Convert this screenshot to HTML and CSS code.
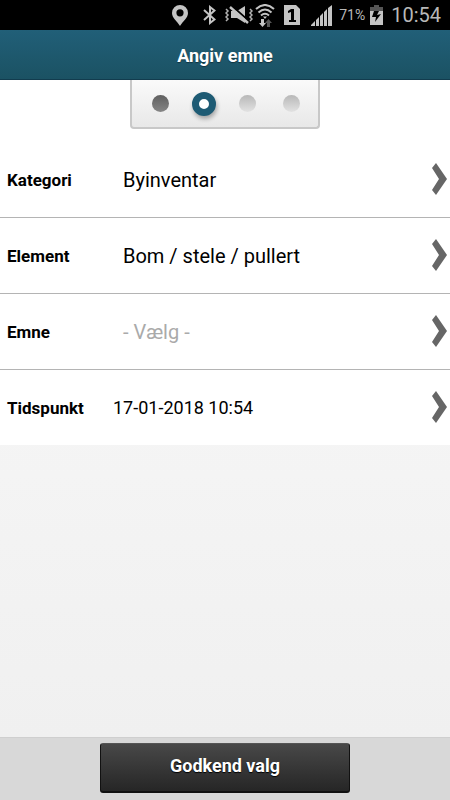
FILE: index.html
```html
<!DOCTYPE html>
<html lang="da">
<head>
<meta charset="utf-8">
<meta name="viewport" content="width=device-width, initial-scale=1">
<title>Angiv emne</title>
<link rel="stylesheet" href="styles.css">
</head>
<body>
<div class="statusbar">
  <svg width="16" height="21" viewBox="0 0 16 21" aria-hidden="true"><path fill="#c4c4c4" fill-rule="evenodd" d="M8 0a8 8 0 0 0-8 8c0 5 5 8 8 13 3-5 8-8 8-13a8 8 0 0 0-8-8zM8 4.200a3.600 3.600 0 1 1 0 7.200 3.600 3.600 0 0 1 0-7.200z"/></svg>
  <svg class="bluetooth" width="13" height="20" viewBox="0 0 13 20" aria-hidden="true"><path fill="none" stroke="#c4c4c4" stroke-width="2" d="M1 5l10.500 9.500L7 18V2l4.500 3.500L1 15"/></svg>
  <svg class="mute" width="28" height="20" viewBox="0 0 28 20" aria-hidden="true">
    <path fill="#c4c4c4" d="M6 6h6l8-5v17l-8-5H6z"/>
    <path stroke="#000" stroke-width="2" d="M7 1l18 16"/>
    <path stroke="#c4c4c4" stroke-width="2.500" d="M5 2l18 16"/>
    <path fill="none" stroke="#b0b0b0" stroke-width="1.500" d="M1 4l2 2-2 2 2 2-2 2 2 2-2 2M25 4l2 2-2 2 2 2-2 2 2 2-2 2"/>
  </svg>
  <svg class="wifi" width="20" height="23" viewBox="0 0 20 23" aria-hidden="true">
    <path fill="none" stroke="#c4c4c4" stroke-width="2" d="M1 5q9-8 18 0M3.500 8.500q6.500-6 13 0M6 11.500q4-3.500 8 0"/>
    <path fill="#c4c4c4" d="M8 12.500h4L10 15zM6 15h3v4h2l-3.500 4L4 19h2z"/>
    <path fill="#555" d="M12 23h3v-4h2l-3.500-4-3.500 4h2z"/>
  </svg>
  <svg class="sim" width="16" height="20" viewBox="0 0 16 20" aria-hidden="true"><path fill="#c4c4c4" d="M0 0h12l4 4v16H0z"/><path fill="#000" d="M7 4h3v11h2v2H5v-2h2V7L4 8V6z"/></svg>
  <svg class="signal" width="21" height="21" viewBox="0 0 21 21" aria-hidden="true"><path fill="#c4c4c4" d="M0 21v-1l4-4v5zM5 21v-6l3-3v9zM9 21V11l3-3v13zM13 21V7l3-3v17zM17 21V3l4-3v21z"/></svg>
  <span class="charge">71%</span>
  <svg class="battery" width="13" height="20" viewBox="0 0 13 20" aria-hidden="true"><path fill="#555" d="M4 0h5v2h4v5H0V2h4z"/><path fill="#c4c4c4" d="M0 6h13v14H0z"/><path fill="#000" d="M4 6h5L7 10l4-1-6 8 1-5H2z"/></svg>
  <time class="clock">10:54</time>
</div>
<header class="titlebar"><h1>Angiv emne</h1></header>
<main class="content">
  <div class="form">
    <ol class="steps" aria-label="Trin 2 af 4">
      <li class="step done"></li>
      <li class="step current" aria-current="step"></li>
      <li class="step"></li>
      <li class="step"></li>
    </ol>
    <button type="button" class="row">
      <span class="label">Kategori</span><span class="value">Byinventar</span>
      <svg class="chevron" width="16" height="33" viewBox="0 0 16 33" aria-hidden="true"><path d="M4 0l11 16L4 32l-4-5 7-11L0 5z"/></svg>
    </button>
    <button type="button" class="row">
      <span class="label">Element</span><span class="value">Bom / stele / pullert</span>
      <svg class="chevron" width="16" height="33" viewBox="0 0 16 33" aria-hidden="true"><path d="M4 0l11 16L4 32l-4-5 7-11L0 5z"/></svg>
    </button>
    <button type="button" class="row">
      <span class="label">Emne</span><span class="value empty">- Vælg -</span>
      <svg class="chevron" width="16" height="33" viewBox="0 0 16 33" aria-hidden="true"><path d="M4 0l11 16L4 32l-4-5 7-11L0 5z"/></svg>
    </button>
    <button type="button" class="row">
      <span class="label">Tidspunkt</span><span class="value date">17-01-2018 10:54</span>
      <svg class="chevron" width="16" height="33" viewBox="0 0 16 33" aria-hidden="true"><path d="M4 0l11 16L4 32l-4-5 7-11L0 5z"/></svg>
    </button>
  </div>
</main>
<footer class="actions"><button type="button" class="confirm">Godkend valg</button></footer>
</body>
</html>
```
FILE: styles.css
```css
* {
  box-sizing: border-box;
}

body {
  margin: 0;
  min-height: 100vh;
  display: flex;
  flex-direction: column;
  font-family: Roboto, "Liberation Sans", sans-serif;
  color: #000;
  background: #f0f0f0;
}

button {
  font: inherit;
  color: inherit;
  margin: 0;
  cursor: pointer;
}

.statusbar {
  height: 30px;
  padding-right: 9px;
  display: flex;
  align-items: center;
  justify-content: flex-end;
  background: #000;
  color: #b8b8b8;
}

.statusbar svg {
  flex: none;
}

.bluetooth {
  margin-left: 15px;
}

.mute {
  margin-left: 9px;
}

.wifi {
  margin-left: 2px;
}

.sim {
  margin-left: 9px;
}

.signal {
  margin-left: 11px;
}

.charge {
  margin-left: 7px;
  font-size: 14px;
}

.battery {
  margin-left: 5px;
}

.clock {
  margin-left: 8px;
  font-size: 20px;
}

.titlebar {
  height: 50px;
  padding-top: 2px;
  display: flex;
  align-items: center;
  justify-content: center;
  background: linear-gradient(#215f78, #1b5263);
  border-bottom: 1px solid #123c4e;
  color: #fff;
}

.titlebar h1 {
  margin: 0;
  font-size: 18px;
  font-weight: 700;
  text-shadow: 0 1px 1px rgba(0, 0, 0, 0.4);
}

.content {
  flex: 1;
  background: linear-gradient(#fafafa, #f0f0f0);
}

.form {
  background: #fff;
}

.steps {
  list-style: none;
  width: 190px;
  height: 49px;
  margin: 0 auto 13px;
  padding: 0 5px 0 7px;
  display: grid;
  grid-template-columns: repeat(4, 1fr);
  align-items: center;
  justify-items: center;
  background: linear-gradient(#fafafa, #e8e8e8);
  border: 2px solid #c8c8c8;
  border-top: 0;
  border-radius: 0 0 4px 4px;
}

.step {
  width: 17px;
  height: 17px;
  border-radius: 50%;
  background: linear-gradient(#b8b8b8, #e2e2e2);
}

.step.done {
  background: linear-gradient(#5f5f5f, #868686);
}

.step.current {
  width: 24px;
  height: 24px;
  border: 7px solid #1e5b74;
  background: #fff;
  box-shadow: 1px 3px 4px rgba(0, 0, 0, 0.3);
}

.row {
  width: 100%;
  height: 76px;
  padding: 0 2px 0 7px;
  display: flex;
  align-items: center;
  border: 0;
  border-bottom: 1px solid #b4b4b4;
  background: #fff;
  text-align: left;
}

.row:last-child {
  height: 75px;
  border-bottom: 0;
}

.label {
  width: 106px;
  font-size: 17px;
  font-weight: 700;
}

.value {
  flex: 1;
  padding-left: 10px;
  font-size: 20px;
}

.value.empty {
  color: #aaa;
}

.value.date {
  padding-left: 0;
  font-size: 18px;
}

.chevron {
  fill: #666;
}

.actions {
  padding: 5px 0 7px;
  display: flex;
  justify-content: center;
  background: #d8d8d8;
  border-top: 1px solid #cfcfcf;
}

.confirm {
  width: 250px;
  height: 50px;
  padding: 0 0 4px;
  border: 1px solid #111;
  border-top-color: #555;
  border-bottom-width: 2px;
  border-radius: 3px;
  background: linear-gradient(#484848, #262626);
  color: #fff;
  font-size: 18px;
  font-weight: 700;
  text-shadow: 0 1px 1px #000;
}
```
